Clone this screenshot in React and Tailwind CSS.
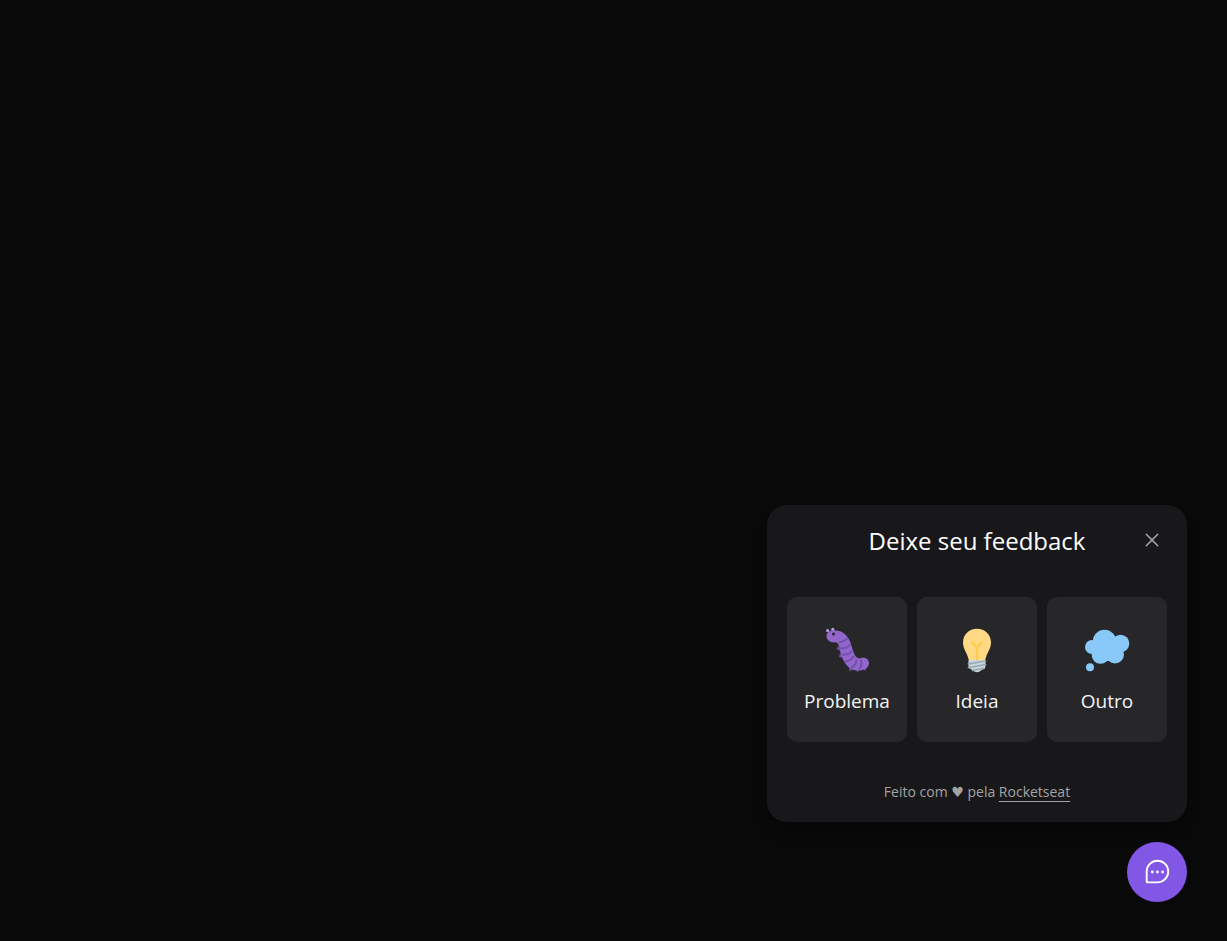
import { PiChatTeardropDots, PiX } from "react-icons/pi";

function BugIcon() {
  return (
    <svg viewBox="0 0 50 50" className="size-[50px]" aria-hidden="true">
      <path
        d="M16 21l-1.500 3 4.500 2zM18 28l-1 4 5 1zM27 42l.5 4.500 4-2.500zM34 43l1 4.500 3.500-4zM40 42l3 4 2.500-5z"
        fill="#7450a8"
      />
      <path d="M8 8L6 6M12 7l-1-3" stroke="#9266cc" strokeWidth="1.400" strokeLinecap="round" />
      <circle cx="5.600" cy="5.600" r="1.600" fill="#b39ae0" />
      <circle cx="10.800" cy="4.400" r="1.600" fill="#b39ae0" />
      <path
        d="M4.500 11C4.500 7.500 8 5.500 13 5.500C21.500 5.500 26.500 11.500 29 19C31 25.500 32.500 31 35.500 33C37.500 34 39 32.800 41.500 32.800C45 32.800 47 35.500 47 38C47 43 42 45.500 36 45.500C28 45.500 22.500 39.500 19.500 31C17.500 25 17.500 18.500 14 17.300C9 18 4.500 15.500 4.500 11Z"
        fill="#9266cc"
      />
      <path
        d="M17.500 17.500C20.500 17 23.500 15.500 25 13.500M18.800 23.500C22 23.500 26.500 22 28 19.800M20.500 29.800C24 29.800 28 28.500 30 26.200M23.500 36.500C26.500 36 30 34 31.500 31.500M29.500 42.500C32.500 41 34 38.500 34.500 35.500M37.500 43.500C39.500 41 40 38.500 39 35.500"
        fill="none"
        stroke="#7450a8"
        strokeWidth="2"
        strokeLinecap="round"
      />
      <circle cx="11.500" cy="9" r="1.500" fill="#27272a" />
    </svg>
  );
}

function IdeaIcon() {
  return (
    <svg viewBox="0 0 50 50" className="size-[50px]" aria-hidden="true">
      <path
        d="M25 3.700C17 3.700 11 9.700 11 17.500C11 24 15 27.500 16.500 34Q17 36 18 36H32Q33 36 33.500 34C35 27.500 39 24 39 17.500C39 9.700 33 3.700 25 3.700Z"
        fill="#ffd983"
      />
      <path
        d="M20 17.500L25 22.500L30 17.500M25 22.500V35"
        fill="none"
        stroke="#ffcc4d"
        strokeWidth="2.400"
        strokeLinecap="round"
        strokeLinejoin="round"
      />
      <path
        d="M16.500 35H33.500V41.500Q33.500 43.500 31 44.300L29 45.500Q27.500 47.300 25 47.300Q22.500 47.300 21 45.500L19 44.300Q16.500 43.500 16.500 41.500Z"
        fill="#ccd6dd"
      />
      <path
        d="M16.500 38.800L33.500 36M16.500 42.500L33.500 39.700M20.500 45.300L32 43.300"
        stroke="#99aab5"
        strokeWidth="1.700"
        strokeLinecap="round"
      />
    </svg>
  );
}

function ThoughtIcon() {
  return (
    <svg viewBox="0 0 50 50" className="size-[50px]" aria-hidden="true">
      <g fill="#88c9f9">
        <circle cx="22.500" cy="16.500" r="11.700" />
        <circle cx="10" cy="22" r="7" />
        <circle cx="38.500" cy="18.500" r="8.800" />
        <circle cx="18.500" cy="30" r="8.800" />
        <circle cx="33" cy="29.500" r="9" />
        <rect x="14" y="17" width="23" height="19" rx="5" />
        <circle cx="8" cy="42.300" r="4" />
      </g>
    </svg>
  );
}

const feedbackTypes = [
  { label: "Problema", Icon: BugIcon },
  { label: "Ideia", Icon: IdeaIcon },
  { label: "Outro", Icon: ThoughtIcon },
];

export default function App() {
  return (
    <main className="flex min-h-screen flex-col items-end justify-end gap-5 bg-[#09090a] px-10 pb-[39px] font-['Open_Sans','Noto_Sans',sans-serif] text-zinc-100">
      <section
        aria-labelledby="feedback-title"
        className="w-full max-w-[420px] rounded-[20px] bg-[#18181b] p-5 shadow-lg"
      >
        <header className="grid grid-cols-[40px_1fr_40px] items-center">
          <h1 id="feedback-title" className="col-start-2 text-center text-2xl text-white">
            Deixe seu feedback
          </h1>
          <button
            type="button"
            aria-label="Fechar"
            className="flex h-[30px] items-center justify-center self-start pl-[10px] text-[#a1a1aa]"
          >
            <PiX className="size-5 shrink-0 stroke-[6]" />
          </button>
        </header>

        <div className="grid grid-cols-3 gap-[10px] py-10">
          {feedbackTypes.map(({ label, Icon }) => (
            <button
              key={label}
              type="button"
              className="flex h-[145px] flex-col items-center gap-[10px] rounded-[10px] bg-[#27272a] pt-7"
            >
              <Icon />
              <span className="text-[19px] leading-8">{label}</span>
            </button>
          ))}
        </div>

        <footer className="text-center text-sm text-[#a3a3a3]">
          Feito com <span className="font-['DejaVu_Sans'] leading-none">♥</span> pela{" "}
          <a href="https://rocketseat.com.br" className="underline underline-offset-4">
            Rocketseat
          </a>
        </footer>
      </section>

      <button
        type="button"
        aria-label="Abrir feedback"
        className="flex size-[60px] items-center justify-center rounded-full bg-[#8257e5] text-white"
      >
        <PiChatTeardropDots className="size-[30px]" />
      </button>
    </main>
  );
}
